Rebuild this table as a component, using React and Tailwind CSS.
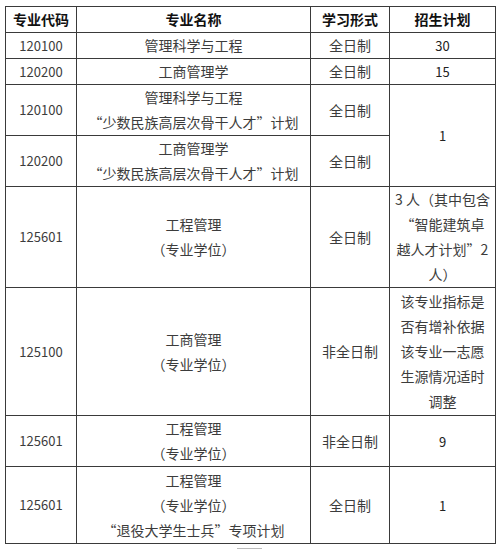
const font = { fontFamily: '"Noto Sans CJK SC", "Noto Sans", sans-serif' }

const rows = [
  { code: '120100', name: ['管理科学与工程'], form: '全日制', plan: ['30'], h: 'h-[26px]' },
  { code: '120200', name: ['工商管理学'], form: '全日制', plan: ['15'], h: 'h-[26px]' },
  {
    code: '120100',
    name: ['管理科学与工程', '“少数民族高层次骨干人才”计划'],
    form: '全日制',
    plan: ['1'],
    span: 2,
    h: 'h-[51px]',
  },
  {
    code: '120200',
    name: ['工商管理学', '“少数民族高层次骨干人才”计划'],
    form: '全日制',
    plan: null,
    h: 'h-[51px]',
  },
  {
    code: '125601',
    name: ['工程管理', '（专业学位）'],
    form: '全日制',
    plan: ['3 人（其中包含', '“智能建筑卓', '越人才计划”2', '人）'],
    h: 'h-[101px]',
  },
  {
    code: '125100',
    name: ['工商管理', '（专业学位）'],
    form: '非全日制',
    plan: ['该专业指标是', '否有增补依据', '该专业一志愿', '生源情况适时', '调整'],
    h: 'h-[128px]',
  },
  { code: '125601', name: ['工程管理', '（专业学位）'], form: '非全日制', plan: ['9'], h: 'h-[50px]' },
  {
    code: '125601',
    name: ['工程管理', '（专业学位）', '“退役大学生士兵”专项计划'],
    form: '全日制',
    plan: ['1'],
    h: 'h-[77px]',
  },
]

const cell = 'border border-[#3a3a3a] text-center align-middle p-0'

export default function App() {
  return (
    <div className="w-[500px] h-[549px] bg-white overflow-hidden pt-[6px] pl-[5px]" style={font}>
      <table className="table-fixed border-collapse w-[490px] text-[14px] text-[#3c3c3c]">
        <colgroup>
          <col className="w-[71px]" />
          <col className="w-[234px]" />
          <col className="w-[79px]" />
          <col className="w-[106px]" />
        </colgroup>
        <thead>
          <tr className="h-[26px]">
            <th className={`${cell} font-bold text-[#111]`}>专业代码</th>
            <th className={`${cell} font-bold text-[#111]`}>专业名称</th>
            <th className={`${cell} font-bold text-[#111]`}>学习形式</th>
            <th className={`${cell} font-bold text-[#111]`}>招生计划</th>
          </tr>
        </thead>
        <tbody>
          {rows.map((r, i) => (
            <tr key={i} className={r.h}>
              <td className={`${cell} text-[13px]`}>{r.code}</td>
              <td className={`${cell} leading-[25px]`}>
                {r.name.map((n, j) => (
                  <div key={j}>{n}</div>
                ))}
              </td>
              <td className={cell}>{r.form}</td>
              {r.plan && (
                <td className={`${cell} leading-[25px]`} rowSpan={r.span || 1}>
                  {r.plan.map((p, j) => (
                    <div key={j} className={/^\d+$/.test(p) ? 'text-[13px] text-[#222]' : ''}>
                      {p}
                    </div>
                  ))}
                </td>
              )}
            </tr>
          ))}
        </tbody>
      </table>
      <div className="ml-[232px] mt-[4px] w-[25px] h-[1px] bg-[#bbb]" />
    </div>
  )
}
